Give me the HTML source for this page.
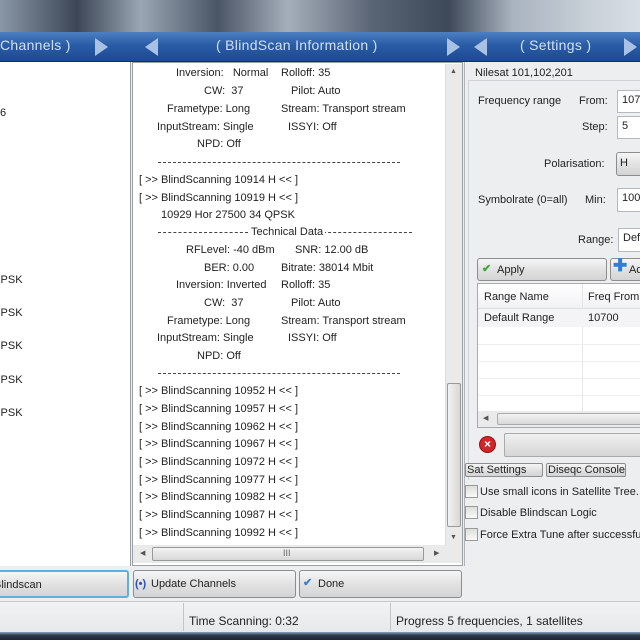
<!DOCTYPE html>
<html><head><meta charset="utf-8"><style>
*{margin:0;padding:0;box-sizing:border-box}
body{width:640px;height:640px;overflow:hidden;position:relative;font-family:"Liberation Sans",sans-serif;font-size:11px;color:#222;background:#eceef0}
.a{position:absolute;white-space:nowrap;line-height:14px}
.hdr{position:absolute;left:0;top:32px;width:640px;height:30px;background:linear-gradient(#4c7fc2,#2a5ca6 45%,#1c4a92);border-bottom:1px solid #10306a}
.ht{position:absolute;top:5px;color:#cfe0f6;font-size:14px;white-space:nowrap;letter-spacing:0.3px}
.ar{position:absolute;top:6px;width:0;height:0;border-top:9px solid transparent;border-bottom:9px solid transparent}
.r{border-left:13px solid #a9c2e4}.l{border-right:13px solid #a9c2e4}
.btn{position:absolute;border:1px solid #8d8d8d;border-radius:3px;background:linear-gradient(#f6f6f6,#e2e2e2 50%,#d4d4d4)}
.in{position:absolute;background:#fff;border:1px solid #b5b9be;padding:3px 4px}
.cb{position:absolute;left:465px;width:13px;height:13px;border:1px solid #999;background:linear-gradient(#ddd,#fafafa)}
.d{position:absolute;left:158px;width:242px;height:1px;border-top:1px dashed #444}
</style></head><body>
<div style="position:absolute;left:0;top:0;width:640px;height:32px;background:linear-gradient(90deg,#8a97a6,#3b4656 12%,#9aa6b3 22%,#4a5566 34%,#a5afbb 45%,#5a6575 58%,#3d4858 70%,#a9b3bf 80%,#c8d0d8 92%,#d8dee5)"></div>
<div class="hdr">
<div class="ht" style="left:0">Channels )</div>
<div class="ar r" style="left:95px"></div>
<div class="ar l" style="left:145px"></div>
<div class="ht" style="left:216px">( BlindScan Information )</div>
<div class="ar r" style="left:447px"></div>
<div class="ar l" style="left:474px"></div>
<div class="ht" style="left:520px">( Settings )</div>
<div class="ar r" style="left:624px"></div>
</div>
<!-- left panel -->
<div style="position:absolute;left:0;top:62px;width:131px;height:506px;background:#fff;border-right:1px solid #9aa0a6"></div>
<div class="a" style="left:0;top:106px">6</div>
<div class="a" style="left:-8px;top:273px">QPSK</div>
<div class="a" style="left:-8px;top:306px">QPSK</div>
<div class="a" style="left:-8px;top:339px">QPSK</div>
<div class="a" style="left:-8px;top:373px">QPSK</div>
<div class="a" style="left:-8px;top:406px">QPSK</div>
<!-- middle panel -->
<div style="position:absolute;left:132px;top:62px;width:331px;height:504px;background:#fff;border:1px solid #9aa0a6"></div>
<div style="position:absolute;left:445px;top:64px;width:17px;height:481px;background:#eaeaea;border-left:1px solid #ddd"></div>
<div style="position:absolute;left:447px;top:383px;width:14px;height:144px;background:linear-gradient(90deg,#f2f2f2,#d8d8d8);border:1px solid #999;border-radius:2px"></div>
<div class="a" style="left:450px;top:65px;font-size:7px;color:#555">▲</div>
<div class="a" style="left:450px;top:531px;font-size:7px;color:#555">▼</div>
<div style="position:absolute;left:133px;top:545px;width:329px;height:18px;background:#eaeaea"></div>
<div style="position:absolute;left:152px;top:547px;width:272px;height:14px;background:linear-gradient(#f2f2f2,#d8d8d8);border:1px solid #999;border-radius:2px"></div>
<div class="a" style="left:140px;top:547px;font-size:7px;color:#555">◀</div>
<div class="a" style="left:434px;top:547px;font-size:7px;color:#555">▶</div>
<div class="a" style="left:283px;top:546px;font-size:9px;color:#666">III</div>
<div class="a" style="left:176px;top:66px">Inversion:&nbsp;&nbsp; Normal</div><div class="a" style="left:281px;top:66px">Rolloff: 35</div>
<div class="a" style="left:204px;top:84px">CW:&nbsp; 37</div><div class="a" style="left:291px;top:84px">Pilot: Auto</div>
<div class="a" style="left:167px;top:102px">Frametype: Long</div><div class="a" style="left:281px;top:102px">Stream: Transport stream</div>
<div class="a" style="left:157px;top:120px">InputStream: Single</div><div class="a" style="left:288px;top:120px">ISSYI: Off</div>
<div class="a" style="left:197px;top:137px">NPD: Off</div>
<div class="d" style="top:162px"></div>
<div class="a" style="left:139px;top:173px">[ &gt;&gt; BlindScanning 10914 H &lt;&lt; ]</div>
<div class="a" style="left:139px;top:191px">[ &gt;&gt; BlindScanning 10919 H &lt;&lt; ]</div>
<div class="a" style="left:161px;top:208px">10929 Hor 27500 34 QPSK</div>
<div class="d" style="top:232px;width:90px"></div>
<div class="d" style="top:232px;left:318px;width:94px"></div>
<div class="a" style="left:249px;top:225px;background:#fff;padding:0 2px">Technical Data</div>
<div class="a" style="left:186px;top:243px">RFLevel: -40 dBm</div><div class="a" style="left:295px;top:243px">SNR: 12.00 dB</div>
<div class="a" style="left:204px;top:261px">BER: 0.00</div><div class="a" style="left:281px;top:261px">Bitrate: 38014 Mbit</div>
<div class="a" style="left:176px;top:278px">Inversion: Inverted</div><div class="a" style="left:281px;top:278px">Rolloff: 35</div>
<div class="a" style="left:204px;top:296px">CW:&nbsp; 37</div><div class="a" style="left:291px;top:296px">Pilot: Auto</div>
<div class="a" style="left:167px;top:314px">Frametype: Long</div><div class="a" style="left:281px;top:314px">Stream: Transport stream</div>
<div class="a" style="left:157px;top:331px">InputStream: Single</div><div class="a" style="left:288px;top:331px">ISSYI: Off</div>
<div class="a" style="left:197px;top:349px">NPD: Off</div>
<div class="d" style="top:373px"></div>
<div class="a" style="left:139px;top:384px">[ &gt;&gt; BlindScanning 10952 H &lt;&lt; ]</div>
<div class="a" style="left:139px;top:402px">[ &gt;&gt; BlindScanning 10957 H &lt;&lt; ]</div>
<div class="a" style="left:139px;top:420px">[ &gt;&gt; BlindScanning 10962 H &lt;&lt; ]</div>
<div class="a" style="left:139px;top:437px">[ &gt;&gt; BlindScanning 10967 H &lt;&lt; ]</div>
<div class="a" style="left:139px;top:455px">[ &gt;&gt; BlindScanning 10972 H &lt;&lt; ]</div>
<div class="a" style="left:139px;top:473px">[ &gt;&gt; BlindScanning 10977 H &lt;&lt; ]</div>
<div class="a" style="left:139px;top:490px">[ &gt;&gt; BlindScanning 10982 H &lt;&lt; ]</div>
<div class="a" style="left:139px;top:508px">[ &gt;&gt; BlindScanning 10987 H &lt;&lt; ]</div>
<div class="a" style="left:139px;top:526px">[ &gt;&gt; BlindScanning 10992 H &lt;&lt; ]</div>
<!-- right panel -->
<div style="position:absolute;left:464px;top:62px;width:176px;height:506px;background:#eceef0;border-left:1px solid #b0b4b8"></div>
<div style="position:absolute;left:468px;top:80px;width:172px;height:400px;border-top:1px solid #d0d4d8;border-left:1px solid #d0d4d8"></div>
<div class="a" style="left:475px;top:66px;background:#eceef0;padding-right:2px">Nilesat 101,102,201</div>
<div class="a" style="left:478px;top:94px">Frequency range</div><div class="a" style="left:579px;top:94px">From:</div>
<div class="in" style="left:617px;top:90px;width:30px;height:23px">107</div>
<div class="a" style="left:582px;top:120px">Step:</div>
<div class="in" style="left:617px;top:116px;width:30px;height:23px">5</div>
<div class="a" style="left:544px;top:157px">Polarisation:</div>
<div class="btn" style="left:616px;top:152px;width:30px;height:24px;padding:4px 3px">H</div>
<div class="a" style="left:478px;top:193px">Symbolrate (0=all)</div><div class="a" style="left:585px;top:193px">Min:</div>
<div class="in" style="left:617px;top:188px;width:30px;height:24px">100</div>
<div class="a" style="left:578px;top:233px">Range:</div>
<div class="in" style="left:618px;top:228px;width:30px;height:24px">Def</div>
<div class="btn" style="left:477px;top:258px;width:130px;height:23px"><span class="a" style="left:4px;top:3px;color:#3a3;font-weight:bold">✔</span><span class="a" style="left:19px;top:4px">Apply</span></div>
<div class="btn" style="left:610px;top:258px;width:40px;height:23px"><span class="a" style="left:2px;top:0px;color:#2b7fd8;font-size:17px;font-weight:bold">✚</span><span class="a" style="left:18px;top:4px">Add</span></div>
<div style="position:absolute;left:477px;top:283px;width:170px;height:145px;background:#fff;border:1px solid #aaa"></div>
<div style="position:absolute;left:478px;top:284px;width:170px;height:25px;background:linear-gradient(#fff,#f1f2f4);border-bottom:1px solid #ddd"></div>
<div style="position:absolute;left:582px;top:284px;width:1px;height:128px;background:#e6e6e6"></div>
<div class="a" style="left:484px;top:290px">Range Name</div><div class="a" style="left:588px;top:290px">Freq From</div>
<div style="position:absolute;left:478px;top:309px;width:170px;height:18px;background:#f4f4f6"></div>
<div class="a" style="left:484px;top:311px">Default Range</div><div class="a" style="left:588px;top:311px">10700</div>
<div style="position:absolute;left:478px;top:344px;width:170px;height:1px;background:#eee"></div>
<div style="position:absolute;left:478px;top:361px;width:170px;height:1px;background:#eee"></div>
<div style="position:absolute;left:478px;top:378px;width:170px;height:1px;background:#eee"></div>
<div style="position:absolute;left:478px;top:395px;width:170px;height:1px;background:#eee"></div>
<div style="position:absolute;left:478px;top:411px;width:170px;height:16px;background:#eaeaea"></div>
<div style="position:absolute;left:497px;top:413px;width:150px;height:12px;background:linear-gradient(#f2f2f2,#d8d8d8);border:1px solid #aaa;border-radius:2px"></div>
<div class="a" style="left:483px;top:412px;font-size:7px;color:#555">◀</div>
<div style="position:absolute;left:479px;top:436px;width:17px;height:17px;border-radius:50%;background:#d0262b;border:1px solid #911;color:#fff;font-weight:bold;font-size:12px;line-height:15px;text-align:center">×</div>
<div style="position:absolute;left:504px;top:433px;width:140px;height:24px;border:1px solid #aaa;border-radius:2px;background:linear-gradient(#f0f0f0,#d6d6d6)"></div>
<div class="btn" style="left:465px;top:463px;width:78px;height:14px;border-radius:2px"><span class="a" style="left:1px;top:-1px">Sat Settings</span></div>
<div class="btn" style="left:546px;top:463px;width:80px;height:14px;border-radius:2px"><span class="a" style="left:1px;top:-1px">Diseqc Console</span></div>
<div class="cb" style="top:485px"></div><div class="a" style="left:480px;top:485px">Use small icons in Satellite Tree.</div>
<div class="cb" style="top:506px"></div><div class="a" style="left:480px;top:506px">Disable Blindscan Logic</div>
<div class="cb" style="top:528px"></div><div class="a" style="left:480px;top:528px">Force Extra Tune after successful</div>
<!-- buttons -->
<div style="position:absolute;left:0;top:566px;width:640px;height:34px;background:#eceef0"></div>
<div class="btn" style="left:-4px;top:570px;width:133px;height:28px;border:2px solid #5fb0dc"><span class="a" style="left:-4px;top:6px">Blindscan</span></div>
<div class="btn" style="left:133px;top:570px;width:163px;height:28px"><span class="a" style="left:1px;top:6px;color:#2a52c8;font-weight:bold">(•)</span><span class="a" style="left:17px;top:6px">Update Channels</span></div>
<div class="btn" style="left:299px;top:570px;width:163px;height:28px"><span class="a" style="left:3px;top:5px;color:#3a7fd0;font-weight:bold">✔</span><span class="a" style="left:18px;top:6px">Done</span></div>
<!-- status -->
<div style="position:absolute;left:0;top:601px;width:640px;height:31px;background:linear-gradient(#f2f3f5,#e6e8ea);border-top:1px solid #c8c8c8"></div>
<div style="position:absolute;left:183px;top:603px;width:1px;height:28px;background:#c5c5c5"></div>
<div style="position:absolute;left:390px;top:603px;width:1px;height:28px;background:#c5c5c5"></div>
<div class="a" style="left:189px;top:614px;font-size:12px">Time Scanning: 0:32</div>
<div class="a" style="left:396px;top:614px;font-size:12px">Progress 5 frequencies, 1 satellites</div>
<div style="position:absolute;left:0;top:632px;width:640px;height:8px;background:linear-gradient(#8aa6c6,#2d3a4c 40%,#1e2632)"></div>
</body></html>
